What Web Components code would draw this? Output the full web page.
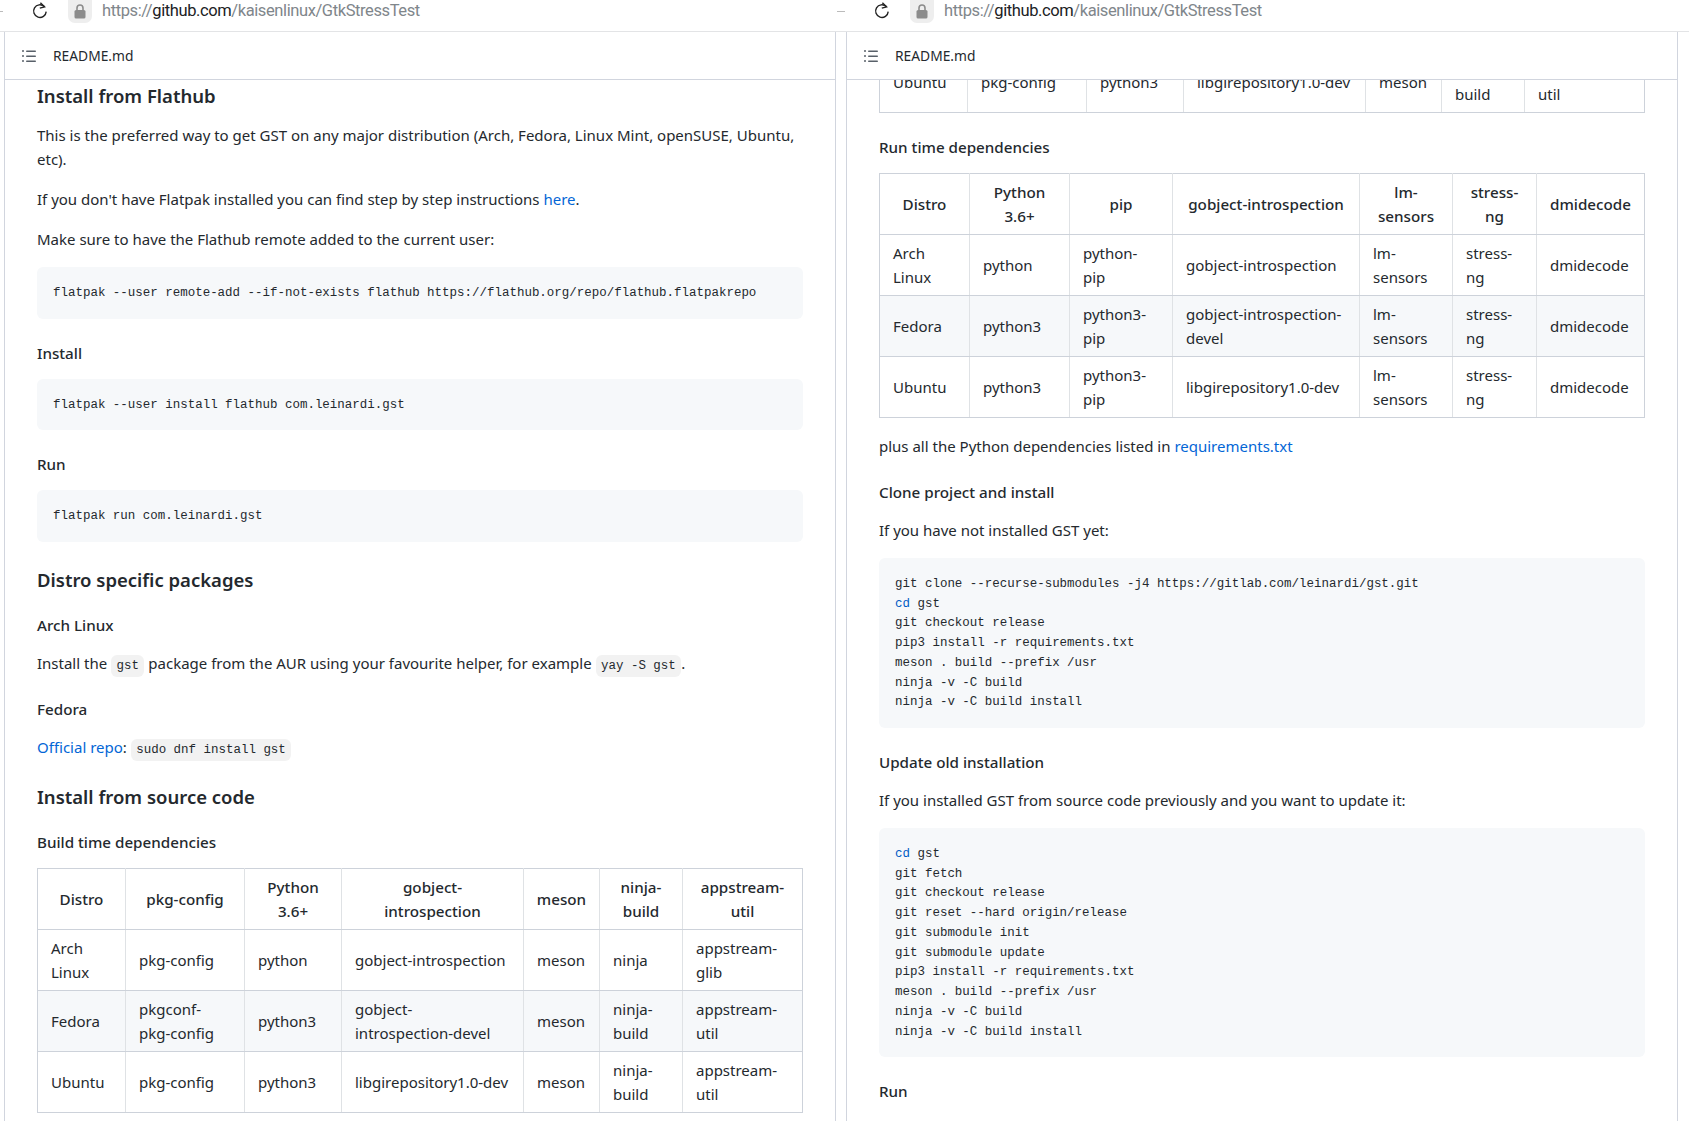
<!DOCTYPE html>
<html>
<head>
<meta charset="utf-8">
<title>README.md</title>
<style>
  html, body { margin: 0; height: 100%; overflow: hidden; background: #fff; }
  body { display: flex; font-family: "Noto Sans", "Open Sans", sans-serif; font-size: 15px; color: #24292e; }
</style>
</head>
<body>

<gh-window style="width:836px" inset="4px 0 0" offset="2px">
  <md-h3>Install from Flathub</md-h3>
  <md-p>This is the preferred way to get GST on any major distribution (Arch, Fedora, Linux Mint, openSUSE, Ubuntu,<br>etc).</md-p>
  <md-p>If you don't have Flatpak installed you can find step by step instructions <md-link>here</md-link>.</md-p>
  <md-p>Make sure to have the Flathub remote added to the current user:</md-p>
  <md-pre>flatpak --user remote-add --if-not-exists flathub https://flathub.org/repo/flathub.flatpakrepo</md-pre>
  <md-h4>Install</md-h4>
  <md-pre>flatpak --user install flathub com.leinardi.gst</md-pre>
  <md-h4>Run</md-h4>
  <md-pre>flatpak run com.leinardi.gst</md-pre>
  <md-h3>Distro specific packages</md-h3>
  <md-h4>Arch Linux</md-h4>
  <md-p>Install the <md-code>gst</md-code> package from the AUR using your favourite helper, for example <md-code>yay -S gst</md-code>.</md-p>
  <md-h4>Fedora</md-h4>
  <md-p><md-link>Official repo</md-link>: <md-code>sudo dnf install gst</md-code></md-p>
  <md-h3>Install from source code</md-h3>
  <md-h4>Build time dependencies</md-h4>
  <md-table name="build"></md-table>
</gh-window>

<gh-window style="flex:1" inset="10px 11px 0" offset="-29px" second>
  <md-table name="buildTail"></md-table>
  <md-h4>Run time dependencies</md-h4>
  <md-table name="run"></md-table>
  <md-p>plus all the Python dependencies listed in <md-link>requirements.txt</md-link></md-p>
  <md-h4>Clone project and install</md-h4>
  <md-p>If you have not installed GST yet:</md-p>
  <md-pre>
    <md-line>git clone --recurse-submodules -j4 https://gitlab.com/leinardi/gst.git</md-line>
    <md-line><md-kw>cd</md-kw> gst</md-line>
    <md-line>git checkout release</md-line>
    <md-line>pip3 install -r requirements.txt</md-line>
    <md-line>meson . build --prefix /usr</md-line>
    <md-line>ninja -v -C build</md-line>
    <md-line>ninja -v -C build install</md-line>
  </md-pre>
  <md-h4>Update old installation</md-h4>
  <md-p>If you installed GST from source code previously and you want to update it:</md-p>
  <md-pre>
    <md-line><md-kw>cd</md-kw> gst</md-line>
    <md-line>git fetch</md-line>
    <md-line>git checkout release</md-line>
    <md-line>git reset --hard origin/release</md-line>
    <md-line>git submodule init</md-line>
    <md-line>git submodule update</md-line>
    <md-line>pip3 install -r requirements.txt</md-line>
    <md-line>meson . build --prefix /usr</md-line>
    <md-line>ninja -v -C build</md-line>
    <md-line>ninja -v -C build install</md-line>
  </md-pre>
  <md-h4>Run</md-h4>
</gh-window>

<script>
class BaseElement extends HTMLElement {
    constructor() {
        super()
        this.attachShadow({ mode: 'open' })
    }
    getStyles() { return '' }
    getMarkup() { return '<slot></slot>' }
    connectedCallback() {
        const template = document.createElement('template')
        template.innerHTML = `<style>${this.getStyles()}</style>${this.getMarkup()}`
        this.shadowRoot.appendChild(template.content.cloneNode(true))
    }
}

class GhWindow extends BaseElement {
    getStyles() {
        return `
          :host { display: flex; flex-direction: column; height: 100vh; min-width: 0; }
          .bar {
            height: 31px; flex: none; position: relative;
            border-bottom: 1px solid #e3e4e6; background: #fff;
          }
          .dash { position: absolute; left: 1px; top: 11px; width: 8px; height: 1px; background: #bbb; }
          .edge { position: absolute; left: 0; top: 11px; width: 3px; height: 1px; background: #bbb; }
          .reload { position: absolute; top: 2px; width: 18px; height: 18px; }
          .lock {
            position: absolute; top: 0; width: 24px; height: 23px; background: #eee; border-radius: 0 0 7px 7px;
            display: flex; align-items: center; justify-content: center;
          }
          .url {
            position: absolute; top: -1px; line-height: 24px;
            font-family: Roboto, "Liberation Sans", sans-serif; font-size: 16.5px; letter-spacing: -.4px; color: #80868b;
            white-space: nowrap;
          }
          .url b { font-weight: 400; color: #202124; }
          .panel {
            flex: 1; min-height: 0; display: flex; flex-direction: column;
            border: solid #d1d5de; border-width: 0 1px;
          }
          .head {
            height: 47px; flex: none; display: flex; align-items: center; padding-left: 16px;
            border-bottom: 1px solid #d1d5de; background: #fff; font-size: 13.8px;
          }
          .head svg { margin-right: 16px; }
          .body { flex: 1; min-height: 0; overflow: hidden; padding: 0 32px; }
          .inner { display: flow-root; }
        `
    }
    getMarkup() {
        const inset = this.getAttribute('inset').split(' ')
        const second = this.hasAttribute('second')
        return `
          <div class="bar">
            <span class="${second ? 'dash' : 'edge'}"></span>
            <svg class="reload" style="left:${second ? 37 : 31}px" viewBox="0 0 18 18" fill="none" stroke="#222" stroke-width="1.4">
              <path d="M13.3 4.6A6.3 6.3 0 1 0 15.2 9.6"/>
              <path d="M9.4 0.8L13.6 4.8L8.8 6.2"/>
            </svg>
            <span class="lock" style="left:${second ? 74 : 68}px">
              <svg width="12" height="15" viewBox="0 0 12 15">
                <path d="M3 6V4a3 3 0 0 1 6 0v2" fill="none" stroke="#8c8c8c" stroke-width="1.6"/>
                <rect x="0.5" y="6" width="11" height="8.5" rx="1.6" fill="#8c8c8c"/>
              </svg>
            </span>
            <span class="url" style="left:${second ? 108 : 102}px">https://<b>github.com</b>/kaisenlinux/GtkStressTest</span>
          </div>
          <div class="panel" style="margin:0 ${inset[1]} 0 ${inset[0]}">
            <div class="head">
              <svg width="16" height="16" viewBox="0 0 16 16" fill="#586069">
                <path fill-rule="evenodd" d="M2 4a1 1 0 100-2 1 1 0 000 2zm3.75-1.5a.75.75 0 000 1.5h8.5a.75.75 0 000-1.5h-8.5zm0 5a.75.75 0 000 1.5h8.5a.75.75 0 000-1.5h-8.5zm0 5a.75.75 0 000 1.5h8.5a.75.75 0 000-1.5h-8.5zM3 8a1 1 0 11-2 0 1 1 0 012 0zm-1 6a1 1 0 100-2 1 1 0 000 2z"/>
              </svg>
              <span>README.md</span>
            </div>
            <div class="body"><div class="inner" style="margin-top:${this.getAttribute('offset')}"><slot></slot></div></div>
          </div>
        `
    }
}

class MdH3 extends BaseElement {
    getStyles() {
        return `
          :host {
            display: block; margin: 24px 0 16px; padding-top: .5px; height: 24.5px;
            font-size: 18.5px; line-height: 25px; font-weight: 600;
          }
          :host(:first-child) { margin-top: 0; }
        `
    }
}

class MdH4 extends BaseElement {
    getStyles() {
        return `:host { display: block; margin: 24px 0 16px; font-size: 15.2px; line-height: 20px; font-weight: 500; }`
    }
}

class MdP extends BaseElement {
    getStyles() {
        return `:host { display: block; margin: 0 0 16px; line-height: 24px; }`
    }
}

class MdLink extends BaseElement {
    getStyles() {
        return `:host { color: #0366d6; }`
    }
}

class MdKw extends BaseElement {
    getStyles() {
        return `:host { color: #005cc5; }`
    }
}

class MdCode extends BaseElement {
    getStyles() {
        return `
          :host {
            font-family: "Liberation Mono", monospace; font-size: 12.47px; line-height: 1;
            padding: 4px 5.44px; border-radius: 6px; background: rgba(27, 31, 35, .06);
          }
        `
    }
}

class MdPre extends BaseElement {
    getStyles() {
        return `
          :host {
            display: block; margin: 0 0 16px; padding: 17px 16px 15px; border-radius: 6px; background: #f6f8fa;
            font-family: "Liberation Mono", monospace; font-size: 12.47px; line-height: 19.72px; white-space: nowrap;
          }
        `
    }
}

class MdLine extends BaseElement {
    getStyles() {
        return `:host { display: block; white-space: pre; }`
    }
}

const buildHead = ['Distro', 'pkg-config', 'Python<br>3.6+', 'gobject-<br>introspection', 'meson', 'ninja-<br>build', 'appstream-<br>util']
const ubuntuBuild = ['Ubuntu', 'pkg-config', 'python3', 'libgirepository1.0-dev', 'meson', 'ninja-<br>build', 'appstream-<br>util']

const TABLES = {
    build: {
        cols: [88, 119, 97, 182, 76, 83, 120],
        head: buildHead,
        rows: [
            ['Arch<br>Linux', 'pkg-config', 'python', 'gobject-introspection', 'meson', 'ninja', 'appstream-<br>glib'],
            ['Fedora', 'pkgconf-<br>pkg-config', 'python3', 'gobject-<br>introspection-devel', 'meson', 'ninja-<br>build', 'appstream-<br>util'],
            ubuntuBuild,
        ],
    },
    buildTail: {
        cols: [88, 119, 97, 182, 76, 83, 120],
        rows: [ubuntuBuild],
    },
    run: {
        cols: [90, 100, 103, 187, 93, 84, 108],
        head: ['Distro', 'Python<br>3.6+', 'pip', 'gobject-introspection', 'lm-<br>sensors', 'stress-<br>ng', 'dmidecode'],
        rows: [
            ['Arch<br>Linux', 'python', 'python-<br>pip', 'gobject-introspection', 'lm-<br>sensors', 'stress-<br>ng', 'dmidecode'],
            ['Fedora', 'python3', 'python3-<br>pip', 'gobject-introspection-<br>devel', 'lm-<br>sensors', 'stress-<br>ng', 'dmidecode'],
            ['Ubuntu', 'python3', 'python3-<br>pip', 'libgirepository1.0-dev', 'lm-<br>sensors', 'stress-<br>ng', 'dmidecode'],
        ],
    },
}

class MdTable extends BaseElement {
    getStyles() {
        return `
          :host { display: block; margin: 0 0 16px; }
          table { width: 765px; table-layout: fixed; border-collapse: collapse; line-height: 24px; }
          th, td {
            padding: 6px 13px; white-space: nowrap; vertical-align: middle; text-align: left;
            border: 1px solid #dfe2e5; border-top-color: #cdd2da; border-bottom-color: #cdd2da;
          }
          th { padding: 6px 0; text-align: center; font-weight: 500; font-size: 15.2px; }
          th:first-child, td:first-child { border-left-color: #cdd2da; }
          th:last-child, td:last-child { border-right-color: #cdd2da; }
          tbody tr:nth-child(even) td { background: #f6f8fa; }
        `
    }
    getMarkup() {
        const table = TABLES[this.getAttribute('name')]
        const cells = (row, tag) => `<tr>${row.map(c => `<${tag}>${c}</${tag}>`).join('')}</tr>`
        return `
          <table>
            <colgroup>${table.cols.map(w => `<col style="width:${w}px">`).join('')}</colgroup>
            ${table.head ? `<thead>${cells(table.head, 'th')}</thead>` : ''}
            <tbody>${table.rows.map(r => cells(r, 'td')).join('')}</tbody>
          </table>
        `
    }
}

customElements.define('gh-window', GhWindow)
customElements.define('md-h3', MdH3)
customElements.define('md-h4', MdH4)
customElements.define('md-p', MdP)
customElements.define('md-link', MdLink)
customElements.define('md-kw', MdKw)
customElements.define('md-code', MdCode)
customElements.define('md-pre', MdPre)
customElements.define('md-line', MdLine)
customElements.define('md-table', MdTable)
</script>
</body>
</html>
